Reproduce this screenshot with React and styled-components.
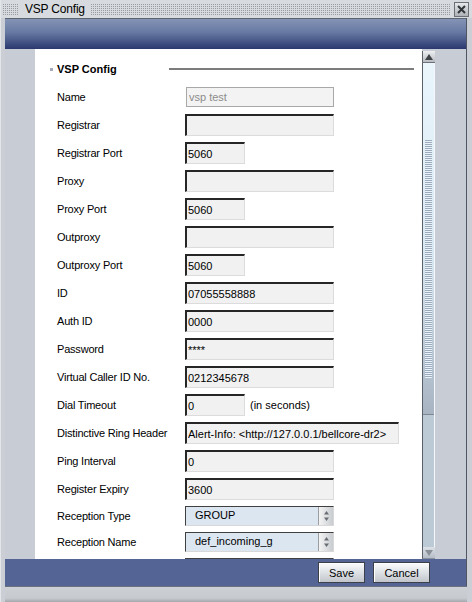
import React from 'react'
import styled, { createGlobalStyle } from 'styled-components'

const GlobalStyle = createGlobalStyle`
  html, body { margin: 0; padding: 0; }
  body {
    width: 472px;
    height: 602px;
    overflow: hidden;
    background: #c9cdd3;
    font-family: "Liberation Sans", Arial, sans-serif;
  }
`

const fields = [
  { label: 'Name', value: 'vsp test', disabled: true },
  { label: 'Registrar', value: '' },
  { label: 'Registrar Port', value: '5060', size: 60 },
  { label: 'Proxy', value: '' },
  { label: 'Proxy Port', value: '5060', size: 60 },
  { label: 'Outproxy', value: '' },
  { label: 'Outproxy Port', value: '5060', size: 60 },
  { label: 'ID', value: '07055558888' },
  { label: 'Auth ID', value: '0000' },
  { label: 'Password', value: '****' },
  { label: 'Virtual Caller ID No.', value: '0212345678' },
  { label: 'Dial Timeout', value: '0', size: 60, unit: '(in seconds)' },
  { label: 'Distinctive Ring Header', value: 'Alert-Info: <http://127.0.0.1/bellcore-dr2>', size: 214 },
  { label: 'Ping Interval', value: '0' },
  { label: 'Register Expiry', value: '3600' },
]

// the last select only peeks in at the bottom edge of the panel
const selects = [
  { id: 'type', label: 'Reception Type', value: 'GROUP' },
  { id: 'name', label: 'Reception Name', value: 'def_incoming_g' },
  { id: 'next', label: '', value: '' },
]

function App() {
  return (
    <Window>
      <GlobalStyle />
      <TitleBar>
        <Dots $w={15} />
        <Title>VSP Config</Title>
        <Dots />
        <CloseButton>
          <svg width="9" height="9" viewBox="0 0 9 9">
            <path d="M1 1 L8 8 M8 1 L1 8" stroke="#303438" strokeWidth="2" />
          </svg>
        </CloseButton>
      </TitleBar>

      <Frame>
        <HeaderBand />
        <Main>
          <SideStrip />
          <Panel>
            <SectionHead>
              <SectionTitle>VSP Config</SectionTitle>
              <Rule />
            </SectionHead>
            <Form>
              {fields.map((f) => (
                <Row key={f.label} $min={22}>
                  <Label>{f.label}</Label>
                  <Field>
                    {f.disabled ? (
                      <DisabledInput value={f.value} readOnly />
                    ) : (
                      <TextInput $w={f.size || 149} value={f.value} readOnly />
                    )}
                    {f.unit && <Unit>{f.unit}</Unit>}
                  </Field>
                </Row>
              ))}
              {selects.map((s) => (
                <Row key={s.id} $min={20}>
                  <Label>{s.label}</Label>
                  <SelectBox>
                    <SelectText>{s.value}</SelectText>
                    <Spinner>
                      <svg width="7" height="12" viewBox="0 0 7 12">
                        <path d="M3.5 1 L6 4.5 L1 4.5 Z M3.5 11 L6 7.5 L1 7.5 Z" fill="#6a6e74" />
                      </svg>
                    </Spinner>
                  </SelectBox>
                </Row>
              ))}
            </Form>
          </Panel>
          <Scrollbar>
            <ArrowButton>
              <svg width="8" height="6" viewBox="0 0 8 6">
                <path d="M4 0 L8 6 L0 6 Z" fill="#404448" />
              </svg>
            </ArrowButton>
            <Track>
              <Thumb>
                <Grip />
              </Thumb>
            </Track>
            <ArrowButton $down>
              <svg width="8" height="6" viewBox="0 0 8 6">
                <path d="M0 0 L8 0 L4 6 Z" fill="#8a9098" />
              </svg>
            </ArrowButton>
          </Scrollbar>
          <SideStrip $grow />
        </Main>
        <Footer>
          <Button $w={47}>Save</Button>
          <Button $w={57}>Cancel</Button>
        </Footer>
      </Frame>
      <BottomEdge />
    </Window>
  )
}

export default App

const Window = styled.div`
  width: 472px;
  height: 602px;
  display: flex;
  flex-direction: column;
  background: #cbcfd5;
  border-left: 1px solid #e4e7ea;
  box-sizing: border-box;
`

const TitleBar = styled.div`
  height: 19px;
  display: flex;
  align-items: center;
  padding: 0 3px 0 2px;
  background: #d7dbdf;
`

const Dots = styled.div`
  flex: ${(p) => (p.$w ? `0 0 ${p.$w}px` : '1')};
  height: 11px;
  background-image:
    linear-gradient(90deg, transparent 1px, #d7dbdf 1px),
    linear-gradient(#989ca2 1px, transparent 1px);
  background-size: 2px 2px;
`

const Title = styled.div`
  padding: 0 6px 0 7px;
  font-size: 12px;
  letter-spacing: -0.2px;
  color: #000;
`

const CloseButton = styled.div`
  width: 13px;
  height: 13px;
  margin-left: 3px;
  display: flex;
  align-items: center;
  justify-content: center;
  border: 1px solid #6c7076;
  background: linear-gradient(#e6e8ea, #aeb2b8);
`

const Frame = styled.div`
  flex: 1;
  display: flex;
  flex-direction: column;
  margin: 0 5px 0 4px;
  border-right: 1px solid #4e5563;
`

const HeaderBand = styled.div`
  height: 30px;
  border-top: 1px solid #5c6470;
  background: linear-gradient(#8494b6, #6778a2 45%, #2a386f);
`

const Main = styled.div`
  height: 510px;
  display: flex;
`

const SideStrip = styled.div`
  width: 30px;
  flex: ${(p) => (p.$grow ? '1' : 'none')};
  background: #c8ccd4;
`

const Panel = styled.div`
  width: 387px;
  flex: none;
  background: #fff;
  overflow: hidden;
  padding: 12px 0 0 22px;
  box-sizing: border-box;
`

const SectionHead = styled.div`
  height: 16px;
  display: flex;
  align-items: center;
`

const SectionTitle = styled.div`
  position: relative;
  font-size: 11px;
  font-weight: bold;
  color: #000;

  &::before {
    content: '';
    position: absolute;
    left: -7px;
    top: 5px;
    width: 3px;
    height: 3px;
    background: #a4acbc;
  }
`

const Rule = styled.div`
  width: 245px;
  height: 2px;
  margin: 0 8px 0 auto;
  background: #7c7c7c;
`

const Form = styled.div`
  margin-top: 9px;
  display: flex;
  flex-direction: column;
  gap: 6px;
`

const Row = styled.div`
  display: grid;
  grid-template-columns: 128px auto;
  align-items: center;
  min-height: ${(p) => p.$min}px;
`

const Label = styled.div`
  font-size: 11px;
  letter-spacing: -0.2px;
  color: #000;
  white-space: nowrap;
`

const Field = styled.div`
  display: flex;
  align-items: center;
  gap: 5px;
`

const TextInput = styled.input`
  width: ${(p) => p.$w}px;
  height: 22px;
  box-sizing: border-box;
  margin: 0;
  padding: 0 2px 0 1px;
  border-style: solid;
  border-width: 2px 1px 1px 2px;
  border-color: #262626 #dcdcdc #dcdcdc #262626;
  background: #f1f1f1;
  font-family: "Liberation Sans", Arial, sans-serif;
  font-size: 11px;
  color: #000;
  outline: none;
`

const DisabledInput = styled.input`
  width: 148px;
  height: 20px;
  box-sizing: border-box;
  margin: 0 0 0 1px;
  padding: 0 2px;
  border: 1px solid #a8a8a8;
  background: #f3f3f3;
  font-family: "Liberation Sans", Arial, sans-serif;
  font-size: 11px;
  color: #8c8c8c;
  outline: none;
`

const Unit = styled.span`
  font-size: 11px;
  color: #000;
`

const SelectBox = styled.div`
  width: 149px;
  height: 20px;
  box-sizing: border-box;
  display: flex;
  border-style: solid;
  border-width: 1px;
  border-color: #404040 #d8d8d8 #d8d8d8 #404040;
  background: #dce6f1;
`

const SelectText = styled.div`
  flex: 1;
  padding-left: 9px;
  font-size: 11px;
  line-height: 17px;
  color: #000;
`

const Spinner = styled.div`
  width: 14px;
  display: flex;
  align-items: center;
  justify-content: center;
  border-left: 1px solid #9a9ea4;
  background: linear-gradient(90deg, #f4f4f4, #c8ccd0);
`

const Scrollbar = styled.div`
  width: 13px;
  flex: none;
  display: flex;
  flex-direction: column;
  padding-top: 2px;
  box-sizing: border-box;
  background: #c8ccd4;
`

const ArrowButton = styled.div`
  height: 12px;
  display: flex;
  align-items: center;
  justify-content: center;
  border-left: 1px solid #5a606a;
  background: ${(p) => (p.$down ? 'linear-gradient(#dde2e8, #b4bcc6)' : 'linear-gradient(#eef0f2, #b8bcc2)')};
  border-bottom: 1px solid ${(p) => (p.$down ? '#8a929c' : '#6c7278')};
  box-sizing: border-box;
`

const Track = styled.div`
  flex: 1;
  border-left: 1px solid #5a606a;
  border-right: 1px solid #f4f8fc;
  background: #bccad6;
`

const Thumb = styled.div`
  height: 352px;
  padding-top: 77px;
  box-sizing: border-box;
  background: linear-gradient(#eaf6fc, #d8e8f2 55%, #a8b4c2 100%);
  border-bottom: 1px solid #7c8894;
`

const Grip = styled.div`
  height: 238px;
  margin: 0 2px;
  background: repeating-linear-gradient(#9cacbc 0 1px, #e8f2f8 1px 2px);
`

const Footer = styled.div`
  height: 27px;
  display: flex;
  align-items: center;
  justify-content: flex-end;
  gap: 8px;
  padding-right: 36px;
  background: #546595;
`

const Button = styled.button`
  width: ${(p) => p.$w}px;
  height: 21px;
  margin: 0;
  padding: 0;
  border: 1px solid #3c4048;
  box-shadow: inset 1px 1px 0 #ffffff;
  background: linear-gradient(#fbfcfd, #d8dce0 60%, #c2c6cc);
  font-family: "Liberation Sans", Arial, sans-serif;
  font-size: 11px;
  color: #000;
`

const BottomEdge = styled.div`
  height: 15px;
  margin: 0 5px 0 4px;
  border-top: 1px solid #6a7280;
  background: linear-gradient(#cdd1d6, #c6cacf 75%, #a4a8ae);
`
